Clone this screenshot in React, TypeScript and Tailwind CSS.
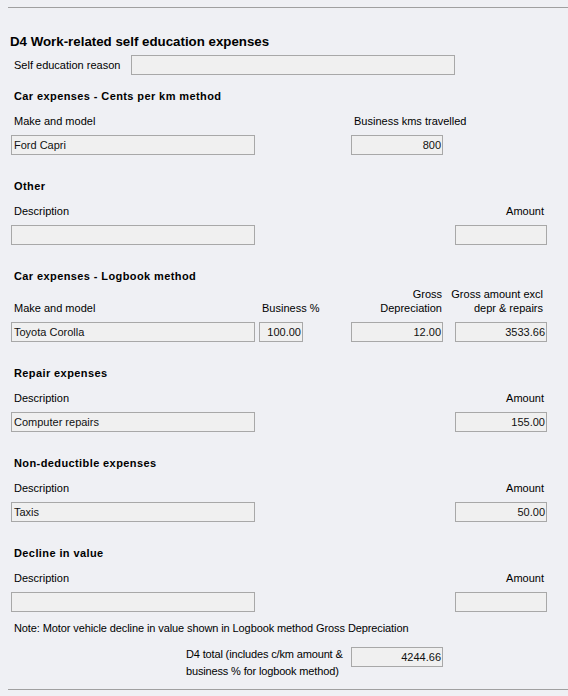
import type { ReactNode } from 'react';

function Field({ value, className = '', right = false }: { value?: string; className?: string; right?: boolean }) {
  return (
    <div
      className={`h-[20px] border border-[#a8a8a8] bg-[#f0f0f0] flex items-center text-[11px] text-[#111] whitespace-nowrap ${
        right ? 'justify-end pr-[1px]' : 'pl-[2px]'
      } ${className}`}
    >
      {value}
    </div>
  );
}

function Heading({ children, className = '' }: { children: ReactNode; className?: string }) {
  return <div className={`ml-[14px] font-bold leading-[14px] tracking-[0.4px] ${className}`}>{children}</div>;
}

// description / amount block used by the simple sections
function DescAmount({ title, desc, amount }: { title: string; desc?: string; amount?: string }) {
  return (
    <div className="mt-[24px]">
      <Heading>{title}</Heading>
      <div className="mt-[11px] w-[547px] pl-[11px] flex justify-between leading-[14px]">
        <span className="pl-[3px]">Description</span>
        <span className="pr-[3px]">Amount</span>
      </div>
      <div className="mt-[7px] flex pl-[11px]">
        <Field value={desc} className="w-[244px]" />
        <Field value={amount} right className="ml-[200px] w-[92px]" />
      </div>
    </div>
  );
}

export default function App() {
  return (
    <div className="min-h-screen bg-[#eff0f4] font-['Liberation_Sans',Arial,sans-serif] text-[11px] text-black pt-[7px]">
      <div className="ml-[8px] border-t border-[#a0a0a0]" />

      <h1 className="mt-[25px] ml-[10px] text-[13.3px] font-bold leading-[17px]">
        D4 Work-related self education expenses
      </h1>

      {/* Self education reason */}
      <div className="mt-[5px] flex items-center">
        <span className="ml-[14px] w-[117px] leading-[14px]">Self education reason</span>
        <Field className="w-[324px]" />
      </div>

      {/* Cents per km */}
      <Heading className="mt-[14px]">Car expenses - Cents per km method</Heading>
      <div className="mt-[11px] flex pl-[11px] leading-[14px]">
        <span className="w-[340px] pl-[3px]">Make and model</span>
        <span className="pl-[3px]">Business kms travelled</span>
      </div>
      <div className="mt-[7px] flex pl-[11px]">
        <Field value="Ford Capri" className="w-[244px]" />
        <Field value="800" right className="ml-[96px] w-[92px]" />
      </div>

      <DescAmount title="Other" />

      {/* Logbook */}
      <div className="mt-[24px]">
        <Heading>Car expenses - Logbook method</Heading>
        <div className="mt-[4px] flex items-end pl-[11px] leading-[14px]">
          <span className="w-[248px] pl-[3px]">Make and model</span>
          <span className="w-[92px] pl-[3px] whitespace-nowrap">Business %</span>
          <span className="w-[92px] pr-[1px] text-right">
            Gross
            <br />
            Depreciation
          </span>
          <span className="w-[104px] pr-[4px] text-right">
            Gross amount excl
            <br />
            depr &amp; repairs
          </span>
        </div>
        <div className="mt-[7px] flex pl-[11px]">
          <Field value="Toyota Corolla" className="w-[244px]" />
          <Field value="100.00" right className="ml-[4px] w-[44px]" />
          <Field value="12.00" right className="ml-[48px] w-[92px]" />
          <Field value="3533.66" right className="ml-[12px] w-[92px]" />
        </div>
      </div>

      <DescAmount title="Repair expenses" desc="Computer repairs" amount="155.00" />
      <DescAmount title="Non-deductible expenses" desc="Taxis" amount="50.00" />
      <DescAmount title="Decline in value" />

      <div className="mt-[9px] ml-[14px] leading-[14px] tracking-[-0.1px]">
        Note: Motor vehicle decline in value shown in Logbook method Gross Depreciation
      </div>

      <div className="mt-[11px] flex ml-[186px]">
        <div className="w-[165px] leading-[17px] whitespace-nowrap tracking-[-0.15px]">
          D4 total (includes c/km amount &amp;
          <br />
          business % for logbook method)
        </div>
        <Field value="4244.66" right className="mt-[1px] w-[92px]" />
      </div>

      <div className="mt-[9px] ml-[8px] border-t border-[#a0a0a0]" />
    </div>
  );
}
